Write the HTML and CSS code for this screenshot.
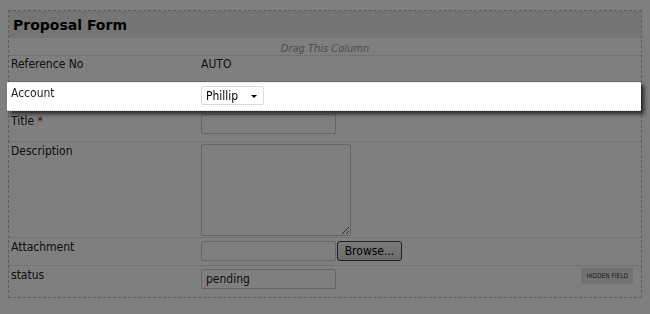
FILE: index.html
```html
<!DOCTYPE html>
<html lang="en">
<head>
  <meta charset="UTF-8">
  <title>Proposal Form</title>
  <link rel="stylesheet" href="styles.css">
</head>
<body>
  <div class="form-wrap">
    <h2 class="form-title">Proposal Form</h2>
    <div class="drag-hint">Drag This Column</div>

    <div class="field-row row-ref">
      <div class="field-label">Reference No</div>
      <div class="field-value">AUTO</div>
    </div>

    <div class="field-row row-account active">
      <div class="field-label">Account</div>
      <div class="field-value">
        <div class="fake-select">Phillip <span class="caret"></span></div>
      </div>
    </div>

    <div class="field-row row-title">
      <div class="field-label">Title <span class="req">*</span></div>
      <div class="field-value"><input type="text" class="text-input"></div>
    </div>

    <div class="field-row row-desc">
      <div class="field-label">Description</div>
      <div class="field-value"><textarea class="text-area"></textarea></div>
    </div>

    <div class="field-row row-attach">
      <div class="field-label">Attachment</div>
      <div class="field-value">
        <input type="text" class="text-input">
        <button class="browse-btn">Browse...</button>
      </div>
    </div>

    <div class="field-row row-status last">
      <div class="field-label">status</div>
      <div class="field-value"><input type="text" class="text-input" value="pending"></div>
      <span class="hidden-badge">HIDDEN FIELD</span>
    </div>
  </div>

  <div class="overlay"></div>
</body>
</html>
```

FILE: styles.css
```css
body {
  margin: 0;
  padding: 10px 8px;
  background-color: #fff;
  font-family: Tahoma, "DejaVu Sans Condensed", "Liberation Sans", sans-serif;
  font-size: 12px;
  color: #222;
}
.form-wrap {
  border: 1px dashed #bbb;
  width: 632px;
}
.form-title {
  box-sizing: border-box;
  margin: 0;
  padding: 6px 4px 0;
  height: 27px;
  background-color: #ebebeb;
  font-family: "DejaVu Sans", sans-serif;
  font-size: 14px;
  font-weight: bold;
  color: #000;
}
.drag-hint {
  box-sizing: border-box;
  height: 18px;
  line-height: 22px;
  text-align: center;
  font-style: italic;
  font-size: 11px;
  color: #999;
  border-bottom: 1px dotted #ccc;
}
.field-row {
  box-sizing: border-box;
  display: grid;
  grid-template-columns: 192px 1fr;
  position: relative;
  border-bottom: 1px dotted #ccc;
}
.field-row.last {
  border-bottom: none;
}
.row-ref { height: 26px; }
.row-account { height: 29px; }
.row-title { height: 31px; }
.row-desc { height: 96px; }
.row-attach { height: 28px; }
.row-status { height: 31px; }
.field-label {
  padding: 2px 2px 0;
  line-height: 15px;
}
.row-ref .field-label,
.row-ref .field-value {
  padding-top: 1px;
}
.row-account .field-label,
.row-title .field-label {
  padding-top: 3px;
}
.field-value {
  display: flex;
  align-items: flex-start;
  gap: 1px;
  line-height: 15px;
  padding-top: 3px;
}
.row-desc .field-value {
  padding-top: 2px;
}
.req {
  color: #c00;
}
.field-row.active {
  z-index: 10;
  background-color: #fff;
  margin-left: -2px;
  padding-left: 2px;
  border-top: 1px dotted #ddd;
  box-shadow: 3px 3px 4px rgba(0, 0, 0, 0.7);
}
.fake-select {
  box-sizing: border-box;
  position: relative;
  width: 63px;
  height: 19px;
  padding: 0 0 0 4px;
  border: 1px solid #ddd;
  border-radius: 2px;
  line-height: 18px;
  font-size: 12px;
  color: #000;
}
.caret {
  position: absolute;
  right: 6px;
  top: 8px;
  border-left: 3px solid transparent;
  border-right: 3px solid transparent;
  border-top: 3px solid #000;
}
.text-input {
  box-sizing: border-box;
  width: 135px;
  height: 20px;
  margin: 0;
  padding: 0 4px;
  border: 1px solid #ccc;
  border-radius: 2px;
  background: #fff;
  font-family: inherit;
  font-size: 12px;
  color: #222;
}
.text-area {
  box-sizing: border-box;
  width: 150px;
  height: 92px;
  margin: 0;
  border: 1px solid #ccc;
  border-radius: 2px;
  resize: both;
}
.browse-btn {
  height: 20px;
  width: 65px;
  padding: 0;
  border: 1px solid #444;
  border-radius: 3px;
  background: linear-gradient(#f6f6f6, #d8d8d8);
  font-family: inherit;
  font-size: 12px;
  color: #000;
}
.hidden-badge {
  position: absolute;
  right: 8px;
  top: 2px;
  padding: 4px 5px;
  background-color: #e4e4e4;
  font-size: 6.5px;
  color: #333;
}
.overlay {
  position: fixed;
  inset: 0;
  background-color: rgba(0, 0, 0, 0.5);
  z-index: 5;
}
```
